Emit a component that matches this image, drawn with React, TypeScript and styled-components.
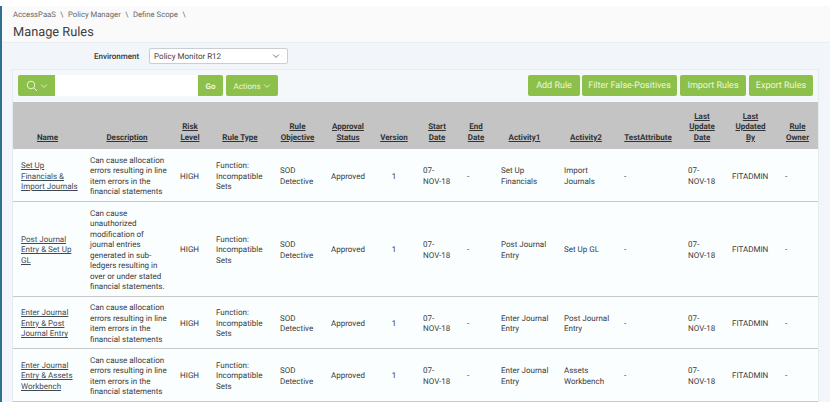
import React from "react";
import styled, { createGlobalStyle } from "styled-components";

const Global = createGlobalStyle`
  html, body { margin: 0; padding: 0; background: #fff; }
  body { font-family: Roboto, "Open Sans", sans-serif; color: #3a3a3a; text-rendering: geometricPrecision; }
`;
const Page = styled.div`
  width: 830px; height: 402px; overflow: hidden; display: flex; background: #f2f6fa;
`;
const Rail = styled.div`
  width: 2px; flex: none; box-sizing: border-box; border-top: 6px solid #fff; background: #2f6f8f;
`;
const Main = styled.div`
  flex: 1; min-width: 0; display: flex; flex-direction: column;
`;
const TopGap = styled.div`
  height: 6px; background: #fff; flex: none;
`;
const Header = styled.header`
  height: 37px; flex: none; box-sizing: border-box; background: #fafafa; border-bottom: 1px solid #e8eef2;
  padding: 2px 0 0 11px; display: flex; flex-direction: column;
`;
const Crumbs = styled.nav`
  display: flex; gap: 4.5px; font-size: 7.7px; line-height: 13px; color: #666;
`;
const Title = styled.h1`
  margin: 3px 0 0; font-size: 12.8px; line-height: 18px; font-weight: 400; color: #404040;
`;
const EnvRow = styled.div`
  height: 26px; flex: none; display: flex; align-items: center; padding-left: 92px; gap: 10px; box-sizing: border-box;
`;
const EnvLabel = styled.label`
  font-size: 8px; font-weight: 500; color: #333;
`;
const EnvSelect = styled.div`
  width: 139px; height: 16px; box-sizing: border-box; background: #fff; border: 1px solid #c9ced2; border-radius: 2px;
  display: flex; align-items: center; justify-content: space-between; padding: 0 7px 0 4px; font-size: 8px; color: #444;
`;
const Panel = styled.section`
  margin-left: 10px; width: 807px; flex: 1; box-sizing: border-box; background: #fbfdfe; border: 1px solid #e6edf1; border-bottom: 0;
  display: flex; flex-direction: column;
`;
const Toolbar = styled.div`
  height: 32px; flex: none; box-sizing: border-box; padding: 5px 5px 0 5px; display: flex; background: #f4f8fb;
`;
const SearchGroup = styled.div`
  display: flex; height: 21px;
`;
const SearchIconButton = styled.div`
  width: 37px; background: #8cc04b; border-radius: 2px 0 0 2px; display: flex; align-items: center; justify-content: center; gap: 2px; color: #e8f3d8;
`;
const SearchInput = styled.div`
  width: 143px; background: #fff;
`;
const GreenButton = styled.button<{ $bold?: boolean; $w: number; $gap?: number; $small?: boolean }>`
  width: ${p => p.$w}px; height: 21px; border: 0; border-radius: 2px; padding: 1px 0 0; background: #8cc04b; color: #ecf6df;
  font-family: inherit; font-size: ${p => (p.$small ? 8 : 9)}px; font-weight: ${p => (p.$bold ? 700 : 400)}; text-rendering: geometricPrecision;
  display: flex; align-items: center; justify-content: center; gap: 2px; margin-left: ${p => p.$gap ?? 3}px; box-sizing: border-box;
`;
const GoButton = styled(GreenButton)`
  border-radius: 0 2px 2px 0;
`;
const Spacer = styled.div` flex: 1; `;
const Grid = styled.table`
  border-collapse: collapse; table-layout: fixed; width: 805px; font-size: 8px; line-height: 10.5px;
`;
const HeadRow = styled.tr` height: 47px; background: #c4c4c4; `;
const Th = styled.th`
  padding: 0 2px 6px; vertical-align: bottom; text-align: center; font-weight: 700; color: #333; text-decoration: underline; white-space: pre-line;
`;
const Row = styled.tr<{ $h: number }>`
  height: ${p => p.$h}px; background: #fbfeff; border-bottom: 1px solid #c8c8c8;
`;
const Td = styled.td<{ $center?: boolean; $pr?: number }>`
  padding: 4px ${p => p.$pr ?? 6}px 0 ${p => (p.$center ? 6 : 8)}px; vertical-align: middle; color: #3a3a3a; overflow: hidden;
  text-align: ${p => (p.$center ? "center" : "left")};
`;
const NameLink = styled.a`
  color: #3f4a55; text-decoration: underline; display: block;
`;

const Chevron = ({ size = 8, color = "currentColor" }: { size?: number; color?: string }) => (
  <svg width={size} height={size} viewBox="0 0 10 10" fill="none" stroke={color} strokeWidth="1.1"><path d="M1.5 3.2 5 6.8l3.5-3.6" /></svg>
);
const Lens = () => (
  <svg width="12" height="12" viewBox="0 0 12 12" fill="none" stroke="currentColor" strokeWidth="1"><circle cx="5" cy="5" r="3.8" /><path d="M7.8 7.8 11 11" /></svg>
);
const DateText = () => <>07-<br />NOV-18</>;

const cols = [69, 90, 36, 64, 51, 50, 42, 44, 34, 63, 60, 64, 44, 53, 41];
const heads = ["Name", "Description", "Risk\nLevel", "Rule Type", "Rule\nObjective", "Approval\nStatus", "Version", "Start\nDate", "End\nDate", "Activity1", "Activity2", "TestAttribute", "Last\nUpdate\nDate", "Last\nUpdated\nBy", "Rule\nOwner"];
const allocation = "Can cause allocation errors resulting in line item errors in the financial statements";
const rows = [
  { h: 52, name: "Set Up Financials & Import Journals", desc: allocation, a1: "Set Up Financials", a2: "Import Journals" },
  { h: 95, name: "Post Journal Entry & Set Up GL", desc: "Can cause unauthorized modification of journal entries generated in sub-ledgers resulting in over or under stated financial statements.", a1: "Post Journal Entry", a2: "Set Up GL" },
  { h: 52, name: "Enter Journal Entry & Post Journal Entry", desc: allocation, a1: "Enter Journal Entry", a2: "Post Journal Entry" },
  { h: 53, name: "Enter Journal Entry & Assets Workbench", desc: allocation, a1: "Enter Journal Entry", a2: "Assets Workbench" },
];

export default function App() {
  return (
    <Page>
      <Global />
      <Rail />
      <Main>
        <TopGap />
        <Header>
          <Crumbs><span>AccessPaaS</span><span>\</span><span>Policy Manager</span><span>\</span><span>Define Scope</span><span>\</span></Crumbs>
          <Title>Manage Rules</Title>
        </Header>
        <EnvRow>
          <EnvLabel>Environment</EnvLabel>
          <EnvSelect>Policy Monitor R12<Chevron color="#666" /></EnvSelect>
        </EnvRow>
        <Panel>
          <Toolbar>
            <SearchGroup>
              <SearchIconButton><Lens /><Chevron /></SearchIconButton>
              <SearchInput />
              <GoButton $w={25} $bold $gap={0} $small>Go</GoButton>
            </SearchGroup>
            <GreenButton $w={52} $small>Actions<Chevron /></GreenButton>
            <Spacer />
            <GreenButton $w={52}>Add Rule</GreenButton>
            <GreenButton $w={95} $gap={2}>Filter False-Positives</GreenButton>
            <GreenButton $w={66}>Import Rules</GreenButton>
            <GreenButton $w={64}>Export Rules</GreenButton>
          </Toolbar>
          <Grid>
            <colgroup>{cols.map((w, i) => <col key={i} width={w} />)}</colgroup>
            <thead><HeadRow>{heads.map(h => <Th key={h}>{h}</Th>)}</HeadRow></thead>
            <tbody>
              {rows.map(r => (
                <Row key={r.name} $h={r.h}>
                  <Td $pr={4}><NameLink>{r.name}</NameLink></Td>
                  <Td $pr={4}>{r.desc}</Td>
                  <Td>HIGH</Td>
                  <Td>Function: Incompatible Sets</Td>
                  <Td>SOD Detective</Td>
                  <Td>Approved</Td>
                  <Td $center>1</Td>
                  <Td><DateText /></Td>
                  <Td>-</Td>
                  <Td>{r.a1}</Td>
                  <Td>{r.a2}</Td>
                  <Td>-</Td>
                  <Td><DateText /></Td>
                  <Td>FITADMIN</Td>
                  <Td>-</Td>
                </Row>
              ))}
            </tbody>
          </Grid>
        </Panel>
      </Main>
    </Page>
  );
}
